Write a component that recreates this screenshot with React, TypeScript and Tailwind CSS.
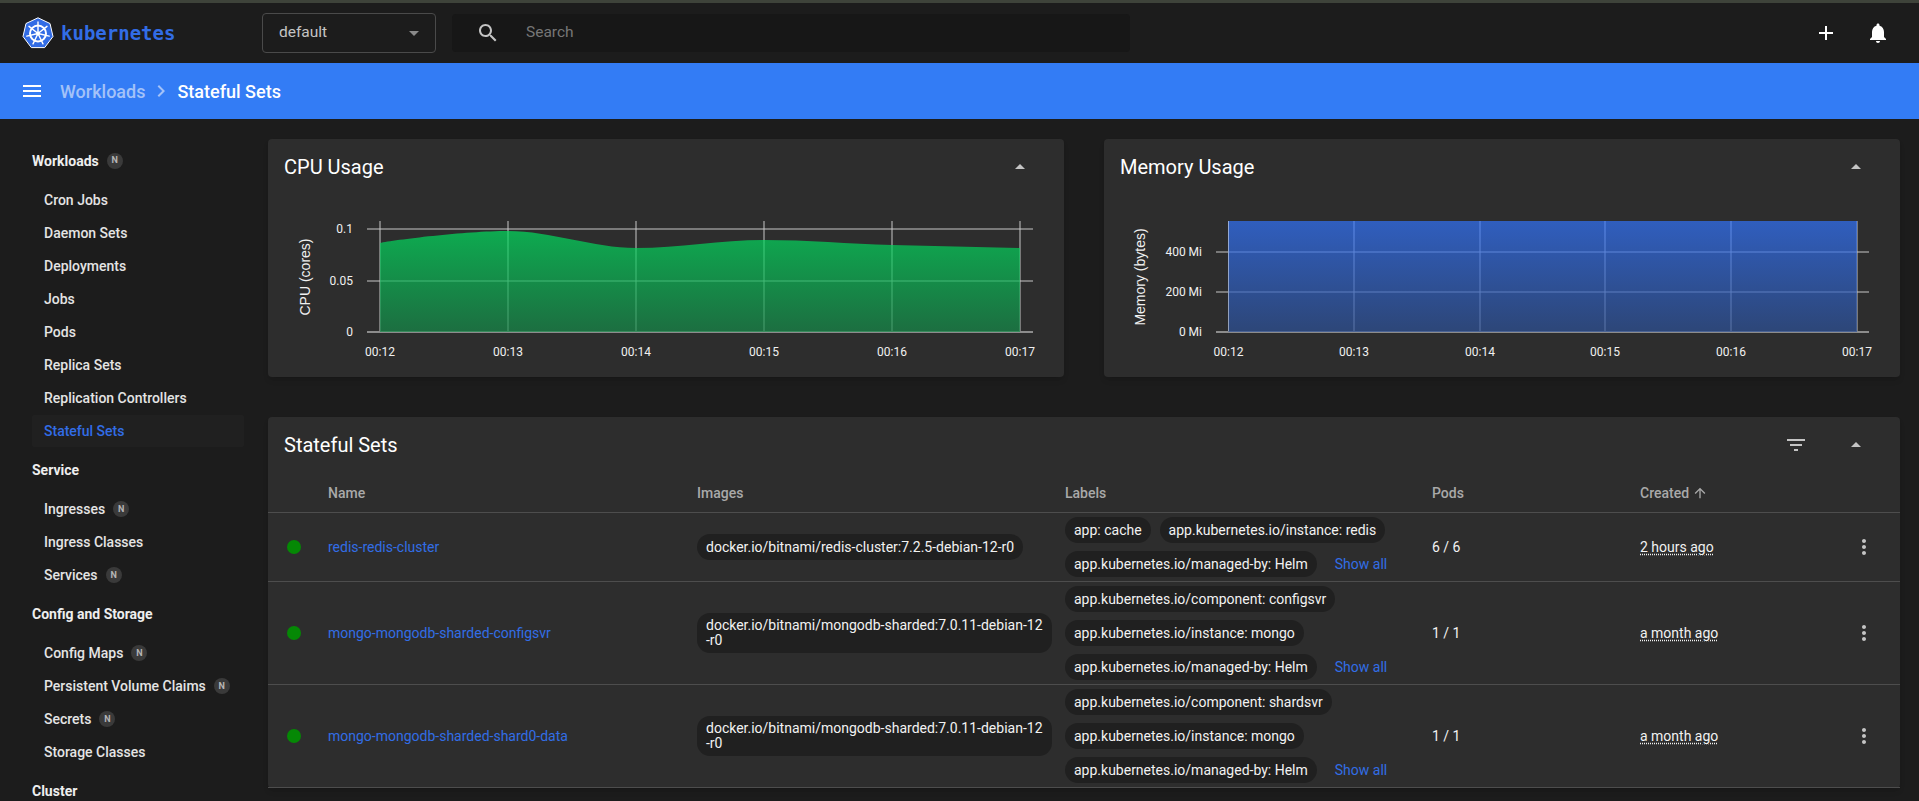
// App.tsx - Kubernetes dashboard, Stateful Sets list
const ICONS = {
  search:
    'M15.5 14h-.79l-.28-.27C15.41 12.59 16 11.11 16 9.5 16 5.91 13.09 3 9.5 3S3 5.91 3 9.5 5.91 16 9.5 16c1.61 0 3.09-.59 4.23-1.57l.27.28v.79l5 4.99L20.49 19l-4.99-5zm-6 0C7.01 14 5 11.99 5 9.5S7.01 5 9.5 5 14 7.01 14 9.5 11.99 14 9.5 14z',
  menu: 'M3 18h18v-2H3v2zm0-5h18v-2H3v2zm0-7v2h18V6H3z',
  chevron: 'M10 6L8.59 7.41 13.17 12l-4.58 4.59L10 18l6-6z',
  plus: 'M19 13h-6v6h-2v-6H5v-2h6V5h2v6h6v2z',
  bell: 'M12 22c1.1 0 2-.9 2-2h-4c0 1.1.89 2 2 2zm6-6v-5c0-3.07-1.64-5.64-4.5-6.32V4c0-.83-.67-1.5-1.5-1.5s-1.5.67-1.5 1.5v.68C7.63 5.36 6 7.92 6 11v5l-2 2v1h16v-1l-2-2z',
  filter: 'M10 18h4v-2h-4v2zM3 6v2h18V6H3zm3 7h12v-2H6v2z',
  more: 'M12 8c1.1 0 2-.9 2-2s-.9-2-2-2-2 .9-2 2 .9 2 2 2zm0 2c-1.1 0-2 .9-2 2s.9 2 2 2 2-.9 2-2-.9-2-2-2zm0 6c-1.1 0-2 .9-2 2s.9 2 2 2 2-.9 2-2-.9-2-2-2z',
  arrowUp: 'M4 12l1.41 1.41L11 7.83V20h2V7.83l5.58 5.59L20 12l-8-8-8 8z',
  dropUp: 'M7 14l5-5 5 5z',
  dropDown: 'M7 10l5 5 5-5z',
};

function Icon({ d, className }: { d: string; className: string }) {
  return (
    <svg viewBox="0 0 24 24" fill="currentColor" className={className}>
      <path d={d} />
    </svg>
  );
}

function Logo() {
  const spokes = [0, 1, 2, 3, 4, 5, 6].map((i) => (i * 2 * Math.PI) / 7);
  return (
    <svg viewBox="0 0 32 32" className="h-[32px] w-[32px] shrink-0">
      <polygon
        points="16,0.8 28,6.5 31,19.5 22.7,30.6 9.3,30.6 1,19.5 4,6.5"
        fill="#326ce5"
        stroke="#ffffff"
        strokeWidth="1"
        strokeLinejoin="round"
      />
      <circle cx="16" cy="16.5" r="8" fill="none" stroke="#ffffff" strokeWidth="2" />
      <circle cx="16" cy="16.5" r="2" fill="#ffffff" />
      {spokes.map((a) => (
        <line
          key={a}
          x1={16}
          y1={16.5}
          x2={16 + Math.sin(a) * 11.5}
          y2={16.5 - Math.cos(a) * 11.5}
          stroke="#ffffff"
          strokeWidth="1.4"
          strokeLinecap="round"
        />
      ))}
    </svg>
  );
}

// Menu boczne
const NAV = [
  {
    title: 'Workloads',
    badge: true,
    items: [
      { name: 'Cron Jobs' },
      { name: 'Daemon Sets' },
      { name: 'Deployments' },
      { name: 'Jobs' },
      { name: 'Pods' },
      { name: 'Replica Sets' },
      { name: 'Replication Controllers' },
      { name: 'Stateful Sets', active: true },
    ],
  },
  {
    title: 'Service',
    items: [{ name: 'Ingresses', badge: true }, { name: 'Ingress Classes' }, { name: 'Services', badge: true }],
  },
  {
    title: 'Config and Storage',
    items: [
      { name: 'Config Maps', badge: true },
      { name: 'Persistent Volume Claims', badge: true },
      { name: 'Secrets', badge: true },
      { name: 'Storage Classes' },
    ],
  },
  { title: 'Cluster', items: [] },
] as { title: string; badge?: boolean; items: { name: string; badge?: boolean; active?: boolean }[] }[];

function Badge() {
  return (
    <span className="ml-[8px] flex h-[16px] w-[16px] items-center justify-center rounded-full bg-[#3a3a3a] text-[9px] font-bold text-[#b5b5b5]">
      N
    </span>
  );
}

function Sidebar() {
  return (
    <nav className="w-[268px] shrink-0 pt-[19px] pl-[32px] pr-[24px]">
      {NAV.map((section) => (
        <div key={section.title}>
          <div className="my-[6px] flex h-[33px] items-center text-sm font-bold text-[#eeeeee]">
            {section.title}
            {section.badge && <Badge />}
          </div>
          {section.items.map((item) => (
            <div key={item.name} className="h-[33px] pt-[1px]">
              <div
                className={
                  item.active
                    ? 'flex h-[32px] items-center rounded-[2px] bg-[#202020] pl-[12px] text-sm font-medium text-[#326de6]'
                    : 'flex h-[32px] items-center pl-[12px] text-sm font-medium text-[#e4e4e4]'
                }
              >
                {item.name}
                {item.badge && <Badge />}
              </div>
            </div>
          ))}
        </div>
      ))}
    </nav>
  );
}

function CardHeader({ title, filter }: { title: string; filter?: boolean }) {
  return (
    <div className="flex h-[56px] items-center pl-4 pr-[32px]">
      <h2 className="text-[20px] font-normal text-white">{title}</h2>
      {filter && <Icon d={ICONS.filter} className="ml-auto h-[24px] w-[24px] text-[#c4c4c4]" />}
      <Icon
        d={ICONS.dropUp}
        className={
          filter
            ? 'ml-[36px] h-[24px] w-[24px] text-[#c4c4c4]'
            : 'ml-auto h-[24px] w-[24px] text-[#c4c4c4]'
        }
      />
    </div>
  );
}

interface ChartProps {
  id: string;
  yTitle: string;
  titleX: number;
  area: string;
  xs: number[];
  ys: { label: string; y: number }[];
  lineFrom: number;
  labelX: number;
  top: string;
  bottom: string;
}

const TIMES = ['00:12', '00:13', '00:14', '00:15', '00:16', '00:17'];

function Chart({ id, yTitle, titleX, area, xs, ys, lineFrom, labelX, top, bottom }: ChartProps) {
  return (
    <svg viewBox="0 0 796 182" className="block h-[182px] w-full">
      <defs>
        <linearGradient id={id} x1="0" y1="0" x2="0" y2="1">
          <stop offset="0%" stopColor={top} stopOpacity="0.7" />
          <stop offset="100%" stopColor={bottom} stopOpacity="0.7" />
        </linearGradient>
      </defs>
      {xs.map((x) => (
        <line key={x} x1={x} x2={x} y1={26} y2={137} stroke="#c8c8c8" strokeWidth="1" />
      ))}
      {ys.map((t) => (
        <g key={t.label}>
          <line
            x1={lineFrom}
            x2={765}
            y1={t.y}
            y2={t.y}
            stroke={t.y === 137 ? '#8c8c8c' : '#c8c8c8'}
            strokeWidth={t.y === 137 ? 2 : 1}
          />
          <text x={labelX} y={t.y + 4} textAnchor="end" fontSize="12" fill="#f0f0f0">
            {t.label}
          </text>
        </g>
      ))}
      <path d={area} fill={`url(#${id})`} />
      {TIMES.map((t, i) => (
        <text key={t} x={xs[i]} y={161} textAnchor="middle" fontSize="12" fill="#f0f0f0">
          {t}
        </text>
      ))}
      <text
        transform={`translate(${titleX} 82) rotate(-90)`}
        textAnchor="middle"
        fontSize="14"
        fill="#f0f0f0"
        className="font-['Liberation_Sans',sans-serif]"
      >
        {yTitle}
      </text>
    </svg>
  );
}

const CPU_AREA =
  'M112,48 C126,45 197,36 240,36 C283,36 325,53 368,53 C411,53 453,45 496,45 C539,45 581,48.8 624,50 C667,51.2 709,52.1 752,53 L752,137 L112,137 Z';

const ROWS = [
  {
    name: 'redis-redis-cluster',
    image: ['docker.io/bitnami/redis-cluster:7.2.5-debian-12-r0'],
    labels: ['app: cache', 'app.kubernetes.io/instance: redis', 'app.kubernetes.io/managed-by: Helm'],
    pods: '6 / 6',
    created: '2 hours ago',
    tall: false,
  },
  {
    name: 'mongo-mongodb-sharded-configsvr',
    image: ['docker.io/bitnami/mongodb-sharded:7.0.11-debian-12', '-r0'],
    labels: [
      'app.kubernetes.io/component: configsvr',
      'app.kubernetes.io/instance: mongo',
      'app.kubernetes.io/managed-by: Helm',
    ],
    pods: '1 / 1',
    created: 'a month ago',
    tall: true,
  },
  {
    name: 'mongo-mongodb-sharded-shard0-data',
    image: ['docker.io/bitnami/mongodb-sharded:7.0.11-debian-12', '-r0'],
    labels: [
      'app.kubernetes.io/component: shardsvr',
      'app.kubernetes.io/instance: mongo',
      'app.kubernetes.io/managed-by: Helm',
    ],
    pods: '1 / 1',
    created: 'a month ago',
    tall: true,
  },
];

const GRID_COLS = 'grid grid-cols-[60px_369px_368px_367px_208px_1fr_72px] items-center';

function StatefulSetsTable() {
  return (
    <section className="mt-10 rounded-[4px] bg-[#2d2d2d] shadow-md">
      <CardHeader title="Stateful Sets" filter />
      <div className={`${GRID_COLS} h-[40px] border-b border-[#4d4d4d] text-sm font-medium text-[#a9a9a9]`}>
        <span />
        <span>Name</span>
        <span>Images</span>
        <span>Labels</span>
        <span>Pods</span>
        <span className="flex items-center gap-[3px]">
          Created
          <Icon d={ICONS.arrowUp} className="h-[16px] w-[16px]" />
        </span>
        <span />
      </div>
      {ROWS.map((row) => (
        <div
          key={row.name}
          className={`${GRID_COLS} border-b border-[#4d4d4d] text-sm text-[#f2f2f2] ${
            row.tall ? 'h-[103px]' : 'h-[69px]'
          }`}
        >
          <span className="ml-[19px] h-[14px] w-[14px] rounded-full bg-[#058805]" />
          <span className="text-[#326de6]">{row.name}</span>
          <span>
            <span className="inline-flex min-h-[26px] items-center rounded-[13px] bg-[#202020] px-[9px] py-[5px] leading-[15px] whitespace-nowrap">
              <span>
                {row.image.map((line) => (
                  <span key={line} className="block">
                    {line}
                  </span>
                ))}
              </span>
            </span>
          </span>
          <div className="flex flex-wrap items-center gap-x-[9px] gap-y-[8px]">
            {row.labels.map((label) => (
              <span key={label} className="flex h-[26px] items-center rounded-[13px] bg-[#202020] px-[9px] whitespace-nowrap">
                {label}
              </span>
            ))}
            <span className="ml-[9px] text-[#326de6]">Show all</span>
          </div>
          <span>{row.pods}</span>
          <span>
            <span className="underline decoration-dotted underline-offset-2">{row.created}</span>
          </span>
          <Icon d={ICONS.more} className="mx-auto h-[24px] w-[24px] text-[#c4c4c4]" />
        </div>
      ))}
    </section>
  );
}

export default function App() {
  return (
    <div className="flex h-screen w-full flex-col overflow-hidden bg-[#1c1c1c] font-['Roboto',sans-serif]">
      <div className="h-[3px] shrink-0 bg-[#3e433a]" />

      {/* Pasek gorny */}
      <header className="flex h-[60px] shrink-0 items-center">
        <div className="flex w-[262px] shrink-0 items-center gap-[7px] pl-[22px]">
          <Logo />
          <span className="font-['DejaVu_Sans_Mono',monospace] text-[19px] leading-none font-bold text-[#326de6]">kubernetes</span>
        </div>
        <div className="flex h-[40px] w-[174px] items-center justify-between rounded-[4px] border border-[#4a4a4a] pl-[16px] pr-[9px] text-[15.5px] text-[#c4c4c4]">
          default
          <Icon d={ICONS.dropDown} className="h-[24px] w-[24px] text-[#8a8a8a]" />
        </div>
        <div className="ml-4 flex h-[38px] w-[678px] items-center gap-[26px] rounded-[4px] bg-[#171717] pl-[24px] text-[15.5px] text-[#767676]">
          <Icon d={ICONS.search} className="h-[24px] w-[24px] text-[#c4c4c4]" />
          Search
        </div>
        <div className="ml-auto flex items-center gap-[28px] pr-[29px] text-white">
          <Icon d={ICONS.plus} className="h-[24px] w-[24px]" />
          <Icon d={ICONS.bell} className="h-[24px] w-[24px]" />
        </div>
      </header>

      {/* Okruszki */}
      <div className="flex h-[56px] shrink-0 items-center bg-[#337cf5] pl-5 text-[18px] font-medium text-white">
        <Icon d={ICONS.menu} className="h-[24px] w-[24px]" />
        <span className="ml-4 text-[#a3c2f8]">Workloads</span>
        <Icon d={ICONS.chevron} className="mx-[4px] h-[24px] w-[24px] text-[#a3c2f8]" />
        <span>Stateful Sets</span>
      </div>

      <div className="flex min-h-0 flex-1">
        <Sidebar />
        <main className="min-w-0 flex-1 pt-5 pr-[19px]">
          <div className="grid grid-cols-2 gap-10">
            <section className="h-[238px] rounded-[4px] bg-[#2d2d2d] shadow-md">
              <CardHeader title="CPU Usage" />
              <Chart
                id="cpu"
                yTitle="CPU (cores)"
                titleX={42}
                area={CPU_AREA}
                xs={[112, 240, 368, 496, 624, 752]}
                ys={[
                  { label: '0.1', y: 34 },
                  { label: '0.05', y: 86 },
                  { label: '0', y: 137 },
                ]}
                lineFrom={99}
                labelX={85}
                top="#00e05f"
                bottom="#158a49"
              />
            </section>
            <section className="h-[238px] rounded-[4px] bg-[#2d2d2d] shadow-md">
              <CardHeader title="Memory Usage" />
              <Chart
                id="mem"
                yTitle="Memory (bytes)"
                titleX={41}
                area="M124.5,26 L753,26 L753,137 L124.5,137 Z"
                xs={[124.5, 250, 376, 501, 627, 753]}
                ys={[
                  { label: '400 Mi', y: 57 },
                  { label: '200 Mi', y: 97 },
                  { label: '0 Mi', y: 137 },
                ]}
                lineFrom={112}
                labelX={98}
                top="#3173fc"
                bottom="#2d5198"
              />
            </section>
          </div>
          <StatefulSetsTable />
        </main>
      </div>
    </div>
  );
}
